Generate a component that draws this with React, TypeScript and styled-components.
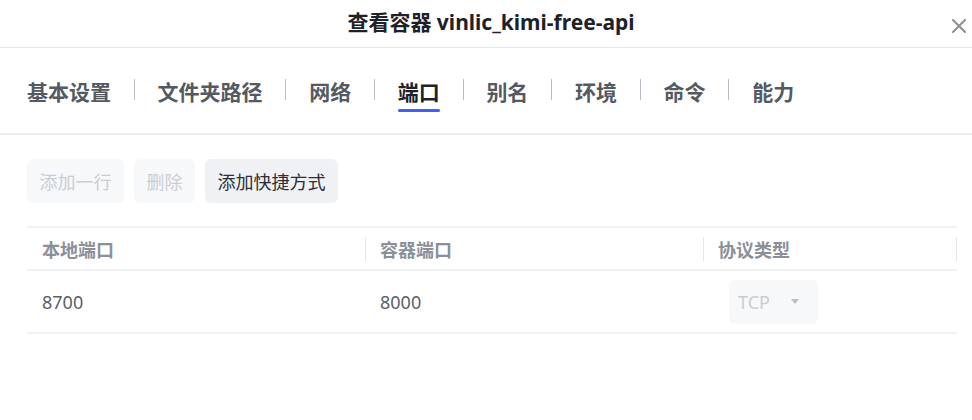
import React, { useState } from 'react';
import styled, { createGlobalStyle } from 'styled-components';

const GlobalStyle = createGlobalStyle`
  html, body {
    margin: 0;
    padding: 0;
    background: #ffffff;
  }
  body {
    font-family: "Noto Sans", "Noto Sans CJK SC", sans-serif;
    color: #1d2129;
  }
`;

const Dialog = styled.div`
  width: 972px;
  height: 420px;
  background: #ffffff;
  overflow: hidden;
`;

const Header = styled.div`
  height: 47px;
  display: grid;
  grid-template-columns: 1fr auto 1fr;
  align-items: center;
  padding: 0 6px 0 16px;
  border-bottom: 1px solid #e5e6eb;
`;

const Title = styled.h2`
  grid-column: 2;
  margin: 0 0 3px;
  font-size: 21px;
  font-weight: 700;
  line-height: 28px;
  color: #1d2129;
`;

const CloseButton = styled.button`
  grid-column: 3;
  justify-self: end;
  width: 14px;
  height: 14px;
  margin-top: 4px;
  padding: 0;
  border: none;
  background: none;
  cursor: pointer;
  display: flex;
  svg {
    display: block;
  }
`;

const TabBar = styled.div`
  display: flex;
  align-items: flex-start;
  gap: 22.8px;
  padding: 30px 27px 21px;
  border-bottom: 2px solid #ebecef;
`;

const Tab = styled.div<{ $active?: boolean }>`
  display: flex;
  flex-direction: column;
  align-items: center;
  cursor: pointer;
  font-size: 21px;
  font-weight: 700;
  line-height: 28px;
  color: ${(p) => (p.$active ? '#1d2129' : '#555a62')};

  &::after {
    content: '';
    display: block;
    width: 100%;
    height: 3px;
    margin-top: 3px;
    border-radius: 2px;
    background: ${(p) => (p.$active ? '#3f5ef5' : 'transparent')};
  }
`;

const TabDivider = styled.span`
  width: 1px;
  height: 21px;
  margin-top: 1px;
  background: #b8bcc4;
`;

const Body = styled.div`
  padding: 24px 15px 0 27px;
`;

const Toolbar = styled.div`
  display: flex;
  gap: 10px;
`;

const ActionButton = styled.button<{ $disabled?: boolean }>`
  height: 44px;
  padding: 0 12.5px;
  border: none;
  border-radius: 6px;
  font-family: inherit;
  font-size: 18px;
  background: ${(p) => (p.$disabled ? '#f7f8fa' : '#f0f1f4')};
  color: ${(p) => (p.$disabled ? '#c9cdd4' : '#2b2f36')};
  cursor: ${(p) => (p.$disabled ? 'not-allowed' : 'pointer')};
`;

const Table = styled.div`
  margin-top: 23px;
  width: 930px;
  border-top: 2px solid #f0f1f3;
`;

const Row = styled.div<{ $head?: boolean }>`
  display: grid;
  grid-template-columns: 339px 338px 253px;
  align-items: center;
  height: ${(p) => (p.$head ? '41px' : '61px')};
  border-bottom: 2px solid #f0f1f3;
`;

const HeadCell = styled.div`
  display: flex;
  align-items: center;
  height: 24px;
  padding-left: 15px;
  border-right: 1px solid #e5e6eb;
  font-size: 18px;
  font-weight: 700;
  color: #8a9099;
  & + & {
    padding-left: 14px;
  }
`;

const Cell = styled.div<{ $indent?: number }>`
  padding-left: ${(p) => p.$indent ?? 15}px;
  font-size: 18px;
  color: #5c6068;
`;

const Select = styled.div`
  width: 89px;
  height: 44px;
  box-sizing: border-box;
  display: flex;
  align-items: center;
  padding-left: 9px;
  gap: 21px;
  border-radius: 6px;
  background: #f7f8fa;
  color: #c9cdd4;
  font-size: 18px;
`;

const Caret = styled.span`
  width: 0;
  height: 0;
  border-left: 4.5px solid transparent;
  border-right: 4.5px solid transparent;
  border-top: 5px solid #b9bdc4;
`;

const tabs = ['基本设置', '文件夹路径', '网络', '端口', '别名', '环境', '命令', '能力'];

const ports = [{ local: '8700', container: '8000', protocol: 'TCP' }];

export default function App() {
  const [active, setActive] = useState('端口');

  return (
    <Dialog>
      <GlobalStyle />
      <Header>
        <Title>查看容器 vinlic_kimi-free-api</Title>
        <CloseButton aria-label="关闭">
          <svg width="14" height="14" viewBox="0 0 14 14">
            <path d="M1 1L13 13M13 1L1 13" stroke="#8a8f97" strokeWidth="2" strokeLinecap="round" />
          </svg>
        </CloseButton>
      </Header>

      <TabBar>
        {tabs.map((t, i) => (
          <React.Fragment key={t}>
            {i > 0 && <TabDivider />}
            <Tab $active={t === active} onClick={() => setActive(t)}>
              {t}
            </Tab>
          </React.Fragment>
        ))}
      </TabBar>

      <Body>
        <Toolbar>
          <ActionButton $disabled>添加一行</ActionButton>
          <ActionButton $disabled>删除</ActionButton>
          <ActionButton>添加快捷方式</ActionButton>
        </Toolbar>

        <Table>
          <Row $head>
            <HeadCell>本地端口</HeadCell>
            <HeadCell>容器端口</HeadCell>
            <HeadCell>协议类型</HeadCell>
          </Row>
          {ports.map((p) => (
            <Row key={p.local}>
              <Cell>{p.local}</Cell>
              <Cell $indent={14}>{p.container}</Cell>
              <Cell $indent={25}>
                <Select>
                  {p.protocol}
                  <Caret />
                </Select>
              </Cell>
            </Row>
          ))}
        </Table>
      </Body>
    </Dialog>
  );
}
